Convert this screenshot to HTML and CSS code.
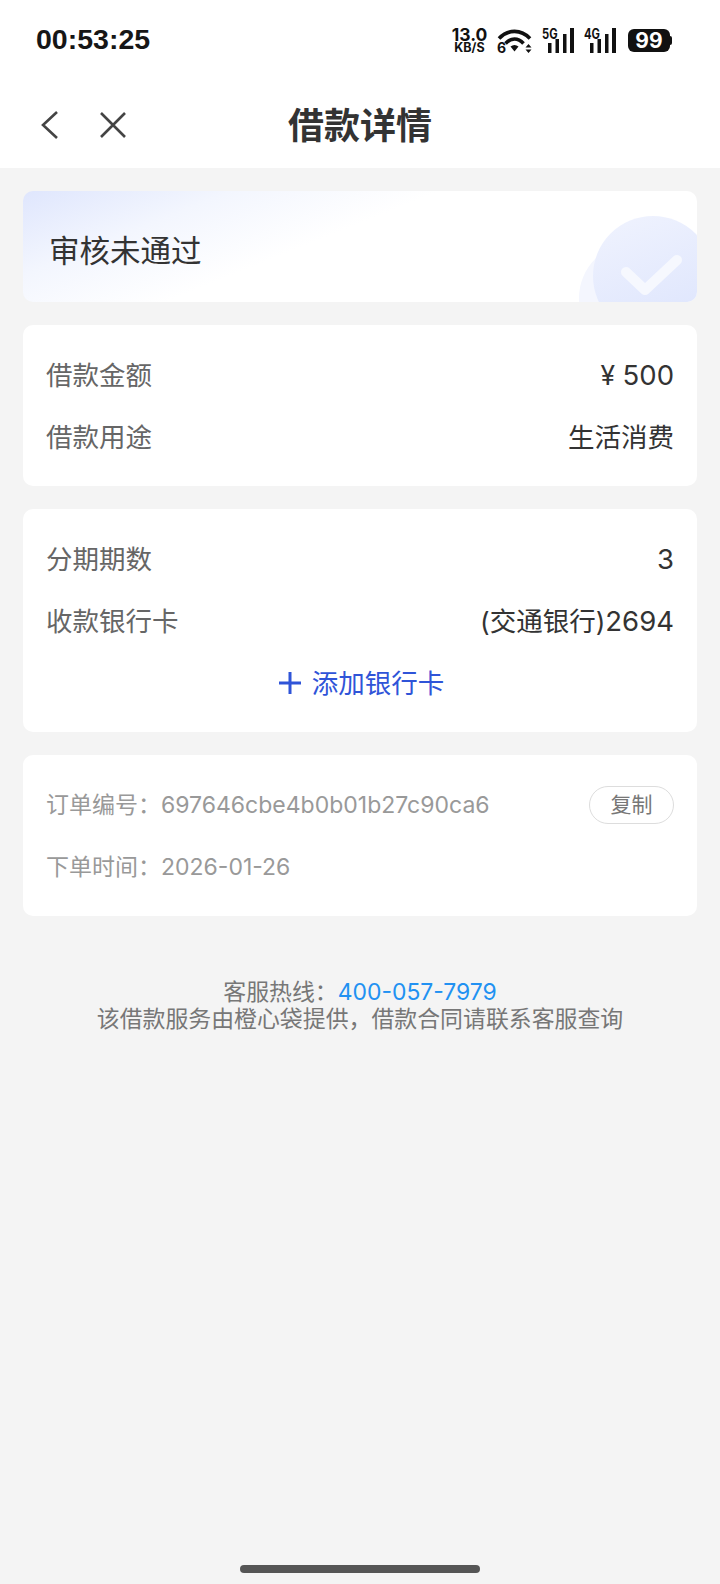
FILE: index.html
```html
<!DOCTYPE html>
<html lang="zh-CN">
<head>
    <meta charset="UTF-8">
    <meta name="viewport" content="width=device-width, initial-scale=1.0">
    <title>借款详情</title>
    <link rel="stylesheet" href="styles.css">
</head>
<body>
    <div class="page">
        <header class="top">
            <div class="status-bar">
                <span class="clock">00:53:25</span>
                <div class="status-icons">
                    <div class="speed"><span class="speed-num">13.0</span><span class="speed-unit">KB/S</span></div>
                    <div class="wifi">
                        <svg width="35" height="25" viewBox="0 0 35 25">
                            <path d="M2 10.500C11 1 24 1 33 10.500" fill="none" stroke="#111" stroke-width="3.600"/>
                            <path d="M8.500 15.500C14 9.500 21 9.500 26.500 15.500" fill="none" stroke="#111" stroke-width="3.600"/>
                            <path d="M13.500 18.500C16 16.500 19 16.500 21.500 18.500L17.500 23.500Z" fill="#111"/>
                            <path d="M31.500 16l3 3.500h-6zM31.500 25l3-3.500h-6z" fill="#111"/>
                        </svg>
                        <span class="wifi-six">6</span>
                    </div>
                    <div class="signal">
                        <span class="net">5G</span>
                        <svg width="26" height="25" viewBox="0 0 26 25"><path d="M0 15h3.500v10H0zM7.500 11H11v14H7.500zM15 6h3.500v19H15zM22 0h4v25h-4z" fill="#111"/></svg>
                    </div>
                    <div class="signal">
                        <span class="net">4G</span>
                        <svg width="26" height="25" viewBox="0 0 26 25"><path d="M0 15h3.500v10H0zM7.500 11H11v14H7.500zM15 6h3.500v19H15zM22 0h4v25h-4z" fill="#111"/></svg>
                    </div>
                    <div class="battery"><span>99</span></div>
                </div>
            </div>
            <nav class="nav">
                <svg class="nav-back" width="20" height="30" viewBox="0 0 20 30"><path d="M17 2L3 15l14 13" fill="none" stroke="#444" stroke-width="2.600"/></svg>
                <svg class="nav-close" width="28" height="28" viewBox="0 0 28 28"><path d="M2 2l24 24M26 2L2 26" fill="none" stroke="#444" stroke-width="2.600"/></svg>
                <h1 class="nav-title">借款详情</h1>
            </nav>
        </header>

        <main class="content">
            <section class="card status-card">
                <span class="status-text">审核未通过</span>
                <svg class="status-badge" width="120" height="90" viewBox="0 0 120 90">
                    <defs>
                        <linearGradient id="badge" x1="0" y1="0" x2="0.4" y2="1">
                            <stop offset="0" stop-color="#f0f3fe"/>
                            <stop offset="1" stop-color="#dfe6fd"/>
                        </linearGradient>
                    </defs>
                    <circle cx="57" cy="86" r="55" fill="#f4f6fe"/>
                    <circle cx="76" cy="64" r="60" fill="url(#badge)"/>
                    <path d="M49 60l19 18 32-30" fill="none" stroke="#f6f8fe" stroke-width="10" stroke-linecap="round" stroke-linejoin="round"/>
                </svg>
            </section>

            <section class="card info-card">
                <div class="row"><span class="label">借款金额</span><span class="value">¥ <span class="num">500</span></span></div>
                <div class="row"><span class="label">借款用途</span><span class="value">生活消费</span></div>
            </section>

            <section class="card info-card">
                <div class="row"><span class="label">分期期数</span><span class="value"><span class="num">3</span></span></div>
                <div class="row"><span class="label">收款银行卡</span><span class="value">(交通银行)<span class="num">2694</span></span></div>
                <div class="add-card">
                    <svg width="22" height="22" viewBox="0 0 22 22"><path d="M0 11h22M11 0v22" stroke="#2f54d8" stroke-width="3"/></svg>
                    <span>添加银行卡</span>
                </div>
            </section>

            <section class="card order-card">
                <div class="order-row">
                    <span>订单编号：697646cbe4b0b01b27c90ca6</span>
                    <span class="copy-btn">复制</span>
                </div>
                <div class="order-row">
                    <span>下单时间：2026-01-26</span>
                </div>
            </section>

            <footer class="service">
                <div>客服热线：<span class="phone">400-057-7979</span></div>
                <div>该借款服务由橙心袋提供，借款合同请联系客服查询</div>
            </footer>
        </main>

        <div class="home-bar"></div>
    </div>
</body>
</html>
```

FILE: styles.css
```css
body {
    font-family: Inter, "Noto Sans CJK SC", sans-serif;
    margin: 0;
    padding: 0;
    background-color: #f4f4f4;
}

.page {
    display: flex;
    flex-direction: column;
    height: 1584px;
    overflow: hidden;
}

/* top area */
.top {
    background-color: #fff;
    height: 168px;
}

.status-bar {
    height: 80px;
    display: flex;
    align-items: center;
    justify-content: space-between;
    padding: 0 48px 0 36px;
}

.clock {
    font-family: "Liberation Sans", sans-serif;
    font-size: 28.500px;
    font-weight: 700;
    color: #161616;
    margin-bottom: 2px;
}

.status-icons {
    display: flex;
    align-items: center;
    gap: 10px;
    color: #111;
}

.speed {
    display: flex;
    flex-direction: column;
    align-items: center;
    width: 35px;
    font-weight: 700;
}

.speed-num {
    font-size: 17.500px;
    line-height: 15px;
}

.speed-unit {
    font-size: 12.500px;
    line-height: 11px;
}

.wifi {
    position: relative;
    width: 35px;
    height: 25px;
}

.wifi-six {
    position: absolute;
    left: 0;
    bottom: 0;
    font-size: 14px;
    font-weight: 700;
    line-height: 10px;
}

.signal {
    position: relative;
    width: 32px;
    height: 25px;
    display: flex;
    justify-content: flex-end;
}

.net {
    position: absolute;
    top: 0;
    left: 0;
    font-size: 14px;
    font-weight: 700;
    line-height: 11px;
    transform: scaleX(0.8);
    transform-origin: left;
}

.battery {
    position: relative;
    width: 42px;
    height: 23px;
    margin-left: 2px;
    margin-right: 2px;
    background-color: #111;
    border-radius: 6px;
    color: #fff;
    font-size: 21px;
    font-weight: 700;
    line-height: 23px;
    text-align: center;
}

.battery::after {
    content: "";
    position: absolute;
    right: -2px;
    top: 7px;
    width: 2px;
    height: 9px;
    background-color: #111;
    border-radius: 0 2px 2px 0;
}

.nav {
    position: relative;
    height: 85px;
    padding-bottom: 3px;
    display: flex;
    align-items: center;
    justify-content: center;
}

.nav-back {
    position: absolute;
    left: 40px;
    top: 30px;
}

.nav-close {
    position: absolute;
    left: 99px;
    top: 31px;
}

.nav-title {
    margin: 0;
    font-size: 36px;
    font-weight: 700;
    color: #333;
}

/* cards */
.content {
    padding: 23px 23px 0;
    display: flex;
    flex-direction: column;
    gap: 23px;
}

.card {
    background-color: #fff;
    border-radius: 10px;
}

.status-card {
    position: relative;
    height: 111px;
    box-sizing: border-box;
    padding: 9px 0 0 26px;
    overflow: hidden;
    display: flex;
    align-items: center;
    background: linear-gradient(158deg, #dfe6fd 0%, #f3f6fe 22%, #fff 44%);
}

.status-text {
    font-size: 30.500px;
    line-height: 36px;
    color: #333;
}

.status-badge {
    position: absolute;
    right: 0;
    bottom: 0;
}

.info-card {
    padding: 19px 23px 18px;
}

.row {
    display: flex;
    justify-content: space-between;
    align-items: center;
    height: 62px;
    line-height: 32px;
}

.label {
    font-size: 26.500px;
    color: #666;
}

.value {
    font-size: 26.500px;
    color: #333;
}

.num {
    font-size: 27.500px;
}

.add-card {
    display: flex;
    justify-content: center;
    align-items: center;
    gap: 11px;
    height: 62px;
    padding-left: 3px;
    font-size: 26.500px;
    line-height: 32px;
    color: #2f54d8;
}

.order-card {
    padding: 19px 23px 18px;
}

.order-row {
    display: flex;
    justify-content: space-between;
    align-items: center;
    height: 62px;
    font-size: 23px;
    line-height: 28px;
    color: #999;
}

.copy-btn {
    width: 85px;
    height: 38px;
    box-sizing: border-box;
    border: 1px solid #ddd;
    border-radius: 19px;
    font-size: 21px;
    line-height: 35px;
    text-align: center;
    color: #777;
}

/* bottom */
.service {
    margin-top: 40px;
    text-align: center;
    font-size: 22.900px;
    line-height: 27px;
    color: #777;
}

.phone {
    color: #2191f2;
}

.home-bar {
    width: 240px;
    height: 8px;
    margin: auto auto 11px;
    background-color: #555;
    border-radius: 4px;
}
```
